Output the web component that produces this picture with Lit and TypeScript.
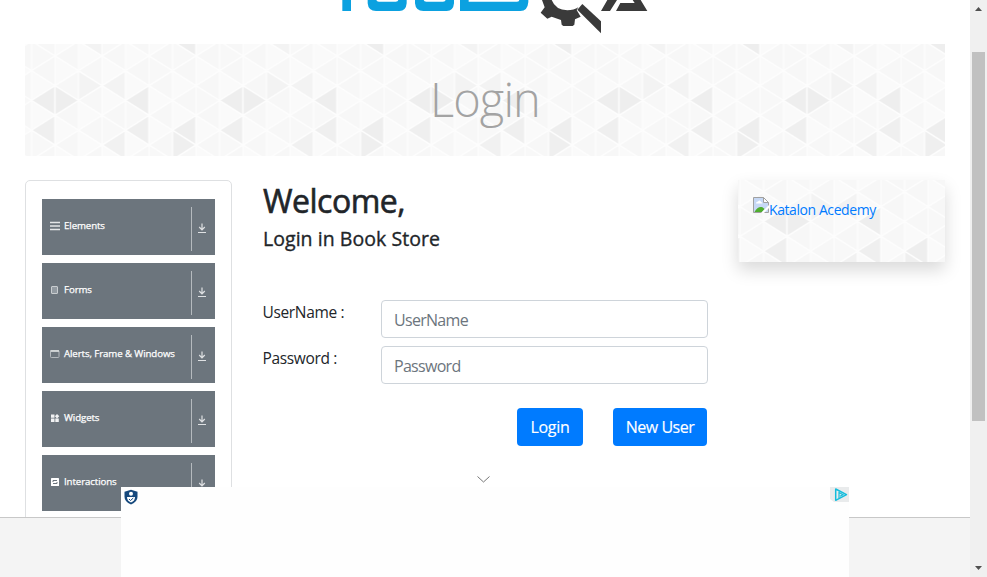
import { LitElement, html, svg, css } from "lit";
import { customElement, property } from "lit/decorators.js";

const COL = 23.5;
const STEP = 29.7;

// Shaded cells of the triangle texture: "column,direction,row" -> fill
const SHADES: Record<string, string> = {
  "0L2": "#eeeeee",
  "1R2": "#eeeeee",
  "0L3": "#efefef",
  "2R1": "#f3f3f3",
  "3L1": "#f3f3f3",
  "4L2": "#eeeeee",
  "4L3": "#efefef",
  "3L3": "#f1f1f1",
  "6L3": "#eeeeee",
  "6R3": "#efefef",
  "6L0": "#eeeeee",
  "2L0": "#f3f3f3",
};

function triangles() {
  const out = [];
  const vy = (line: number, row: number) =>
    (line % 2 === 0 ? -2.9 : 12) + row * STEP;
  for (let c = 0; c < 8; c++) {
    const x0 = c * COL;
    const x1 = x0 + COL;
    for (let r = -1; r < 5; r++) {
      const l = vy(c, r);
      const rt = vy(c + 1, r);
      const h = STEP / 2;
      out.push(svg`<polygon class="cell" points="${x0},${l} ${x1},${l - h} ${x1},${l + h}"
        fill=${SHADES[`${c}L${r}`] ?? "#f7f7f7"}></polygon>`);
      out.push(svg`<polygon class="cell" points="${x1},${rt} ${x0},${rt - h} ${x0},${rt + h}"
        fill=${SHADES[`${c}R${r}`] ?? ((c + r) % 3 ? "#fafafa" : "#f8f8f8")}></polygon>`);
    }
  }
  return out;
}

@customElement("triangle-texture")
class TriangleTexture extends LitElement {
  @property({ type: Number }) dx = 0;
  @property({ type: Number }) dy = 0;
  static styles = css`
    :host { display: block; overflow: hidden; }
    svg { display: block; width: 100%; height: 100%; }
    .cell { stroke: #fdfdfd; stroke-width: 1.3; }
  `;
  render() {
    return html`<svg>
      <defs>
        <pattern id="tri" patternUnits="userSpaceOnUse" width="188" height="160"
          patternTransform="translate(${this.dx} ${this.dy})">${triangles()}</pattern>
      </defs>
      <rect y=${this.dy} width="100%" height="160" fill="url(#tri)"></rect>
    </svg>`;
  }
}

const ICONS = {
  list: svg`<path d="M0 1.500h10M0 5h10M0 8.500h10" stroke="#e4e6e8" stroke-width="1.700"></path>`,
  form: svg`<rect x="1.500" y="1.500" width="6" height="7" rx=".5" fill="#929aa1" stroke="#c9cdd0"></rect>`,
  window: svg`<rect x=".5" y="1.500" width="8.500" height="7" rx=".8" fill="none" stroke="#b3b8bd"></rect><path d="M.5 2h8.500" stroke="#d5d8da" stroke-width="1.800"></path>`,
  widgets: svg`<path d="M1 1.500h3.500v3.300H1zM1 5.600h3.500v3.300H1zM5.300 5.600h3.500v3.300H5.300zM7 .9l2.300 2.300L7 5.400 4.900 3.200z" fill="#f1f2f3"></path>`,
  swap: svg`<rect x="1" y="1" width="8" height="8" rx=".6" fill="#fff"></rect><path d="M3 5V3.500h4M7 5v1.500H3" stroke="#6c757d" fill="none"></path>`,
};

const GROUPS = [
  { label: "Elements", icon: ICONS.list },
  { label: "Forms", icon: ICONS.form },
  { label: "Alerts, Frame & Windows", icon: ICONS.window },
  { label: "Widgets", icon: ICONS.widgets },
  { label: "Interactions", icon: ICONS.swap },
];

@customElement("app-root")
class AppRoot extends LitElement {
  static styles = css`
    :host {
      display: flex;
      position: relative;
      width: 987px;
      height: 577px;
      overflow: hidden;
      background: #fff;
      color: #212529;
      font-family: "Open Sans", "Noto Sans", sans-serif;
      font-size: 16px;
      line-height: 24px;
    }
    * { box-sizing: border-box; }
    .view { width: 970px; height: 577px; display: flex; flex-direction: column; }
    .page { height: 517px; overflow: hidden; padding: 0 25px; }
    .footer { height: 60px; border-top: 1px solid #c8c8c8; background: #f4f4f4; }
    .logo { display: block; width: 330px; height: 44px; margin-left: 305px; }
    .banner { display: grid; height: 112px; }
    .banner > * { grid-area: 1 / 1; }
    .title {
      z-index: 1; margin: 0; text-align: center; font-size: 47px; font-weight: 300;
      line-height: 110px; color: #a3a3a3; letter-spacing: -0.9px;
    }
    .columns { display: flex; align-items: flex-start; margin-top: 24px; }
    .side { width: 207px; height: 420px; border: 1px solid #dee0e2; border-radius: 5px; padding: 18px 16px; }
    .group {
      display: flex; align-items: center; height: 56px; margin-bottom: 8px; padding-left: 8px;
      background: #6c757d; color: #fff; font-size: 9.700px; line-height: 14px;
    }
    .gicon { width: 10px; height: 10px; margin-right: 4px; margin-top: -2px; }
    .glabel { flex: 1; white-space: nowrap; margin-top: -2px; letter-spacing: -0.1px; -webkit-text-stroke: 0.25px #fff; }
    .gdown {
      height: 44px; width: 24px; border-left: 1px solid #b5babe; margin-top: 4px;
      display: flex; align-items: center; padding: 0 0 3px 5px;
    }
    .main { width: 446px; margin-left: 30px; }
    .h2 { margin: 2px 0 0 1px; font-size: 32px; font-weight: 400; line-height: 38px; letter-spacing: -0.5px; -webkit-text-stroke: 0.6px #212529; }
    .h5 { margin: 7px 0 0 1px; font-size: 19.500px; font-weight: 400; line-height: 24px; letter-spacing: 0.05px; -webkit-text-stroke: 0.35px #212529; }
    .form { margin-top: 49px; display: grid; grid-template-columns: 119px 327px; row-gap: 8px; }
    .lab { letter-spacing: -0.35px; font-size: 15.500px; padding-left: 0.5px; }
    .inp {
      width: 327px; height: 38px; border: 1px solid #ced4da; border-radius: 4px; padding: 2px 12px 0;
      font: inherit; letter-spacing: -0.7px; outline: none; color: #495057; background: #fff;
    }
    .inp::placeholder { color: #6c757d; opacity: 1; }
    .actions { display: flex; justify-content: flex-end; gap: 30px; margin-top: 24px; padding-right: 1px; }
    .btn {
      height: 38px; border: 0; border-radius: 4px; background: #007bff; color: #fff; padding: 0;
      font: inherit; letter-spacing: -0.5px; -webkit-text-stroke: 0.15px #fff;
    }
    .b1 { width: 66px; letter-spacing: -0.3px; }
    .b2 { width: 94px; }
    .promo { width: 207px; height: 82px; margin-left: 30px; display: grid; box-shadow: 0 8px 16px rgba(0, 0, 0, 0.15); }
    .promo > * { grid-area: 1 / 1; }
    .link {
      z-index: 1; display: flex; align-items: flex-start; padding: 17px 15px; color: #007bff;
      font-size: 14px; line-height: 26px; letter-spacing: -0.42px; white-space: nowrap;
    }
    .broken { flex: none; width: 16px; height: 16px; }
    .ad { position: absolute; left: 121px; top: 487px; width: 728px; height: 90px; background: #fefefe; display: flex; justify-content: space-between; }
    .shield { width: 14px; height: 16px; margin: 2px 0 0 3px; }
    .choices { width: 19px; height: 15px; }
    .collapse { position: absolute; left: 476px; top: 474px; width: 15px; height: 10px; }
    .scroll { width: 17px; height: 577px; background: #f0f0f0; display: flex; flex-direction: column; align-items: center; }
    .arrow { width: 17px; height: 17px; }
    .thumb { width: 13px; height: 369px; margin: 35px 0 139px; background: #c1c1c1; }
  `;

  render() {
    return html`
      <div class="view">
        <div class="page">
          <svg class="logo" viewBox="0 0 990 132">
            <g fill="#0ba1e0">
              <path d="M37 0h26v33H37zM113 0h26q1 5 8 5h50q7 0 8-5h25v10q-2 23-22 23h-70q-23 0-25-23z"></path>
              <path d="M255 0h26q1 5 8 5h50q7 0 8-5h25v10q-2 23-22 23h-70q-23 0-25-23z"></path>
              <path d="M390 0h26v5h145q7 0 7-5h27v6q-2 27-24 27H390z"></path>
            </g>
            <g fill="#3a3a3a">
              <path d="M636 0h29q12 30 47 31 20 0 33-9l-5 8 12 20-17 8-2 16-5 4h-28l-5-4-2-14-28-10-13 6-20-18 12-16z"></path>
              <path d="M757 12l56 52v36l-71-71z"></path>
              <path d="M832 0h29l-21 33h-27zM871 9h43l-6-9h24l20 33h-94z"></path>
            </g>
          </svg>
          <div class="banner">
            <triangle-texture .dx=${6.5} .dy=${0}></triangle-texture>
            <h1 class="title">Login</h1>
          </div>
          <div class="columns">
            <nav class="side">
              ${GROUPS.map(
                (g) => html`<div class="group">
                  <svg class="gicon" viewBox="0 0 10 10">${g.icon}</svg>
                  <span class="glabel">${g.label}</span>
                  <span class="gdown"><svg width="10" height="10" viewBox="0 0 10 10" fill="none" stroke="#dfe1e3">
                    <path d="M5 .5v6M2.200 4L5 6.800 7.800 4" stroke-width="1.200"></path><path d="M1 9.500h8"></path>
                  </svg></span>
                </div>`
              )}
            </nav>
            <main class="main">
              <h2 class="h2">Welcome,</h2>
              <h5 class="h5">Login in Book Store</h5>
              <div class="form">
                <label class="lab">UserName :</label><input class="inp" placeholder="UserName" />
                <label class="lab">Password :</label><input class="inp" type="password" placeholder="Password" />
              </div>
              <div class="actions">
                <button class="btn b1">Login</button><button class="btn b2">New User</button>
              </div>
            </main>
            <aside class="promo">
              <triangle-texture .dx=${25.5} .dy=${-15}></triangle-texture>
              <a class="link">
                <svg class="broken" viewBox="0 0 16 16">
                  <path d="M.5.500h10l5 5v10H.5z" fill="#c6d8f5" stroke="#a0a0a0"></path>
                  <path d="M10.500.500v5h5z" fill="#fff" stroke="#a0a0a0"></path>
                  <path d="M3 6.500q0-2 2-2 2-2 3 .5 1.500 0 1.500 1.500z" fill="#fff"></path>
                  <path d="M1.500 15q3-5.500 7-5 2 .5 3 2L9 15z" fill="#4fae2e"></path>
                  <path d="M16 8v3l-5 5H8z" fill="#fff"></path>
                </svg><span>Katalon Acedemy</span>
              </a>
            </aside>
          </div>
        </div>
        <div class="footer"></div>
      </div>
      <div class="scroll">
        <svg class="arrow" viewBox="0 0 17 17"><path d="M5 11l3.500-4 3.500 4z" fill="#505050"></path></svg>
        <div class="thumb"></div>
        <svg class="arrow" viewBox="0 0 17 17"><path d="M5 6l3.500 4L12 6z" fill="#505050"></path></svg>
      </div>
      <svg class="collapse" viewBox="0 0 15 10" fill="none" stroke="#777"><path d="M1.500 2.500l6 5.500 6-5.500"></path></svg>
      <div class="ad">
        <svg class="shield" viewBox="0 0 14 16">
          <path d="M7 .8l6.500 2v5q0 5-6.500 7.700Q.5 12.800.5 7.800v-5z" fill="#15487c"></path>
          <circle cx="7" cy="4.700" r="2" fill="#fff"></circle>
          <path d="M3 8h8q0 4-4 5.500Q3 12 3 8z" fill="#fff"></path>
          <path d="M5 10l1.500 1.500L9.300 9" fill="none" stroke="#15487c"></path>
        </svg>
        <svg class="choices" viewBox="0 0 19 15">
          <path d="M0 0h19v15H4L0 12z" fill="#e9ebec"></path>
          <path d="M5.700 2v11.300L16.500 7.700z" fill="none" stroke="#12bcdc" stroke-width="1.500" stroke-linejoin="round"></path>
          <path d="M9 11V5.500l4 2.200-3 1.600" fill="none" stroke="#12bcdc" stroke-width="1.200"></path>
        </svg>
      </div>
    `;
  }
}
